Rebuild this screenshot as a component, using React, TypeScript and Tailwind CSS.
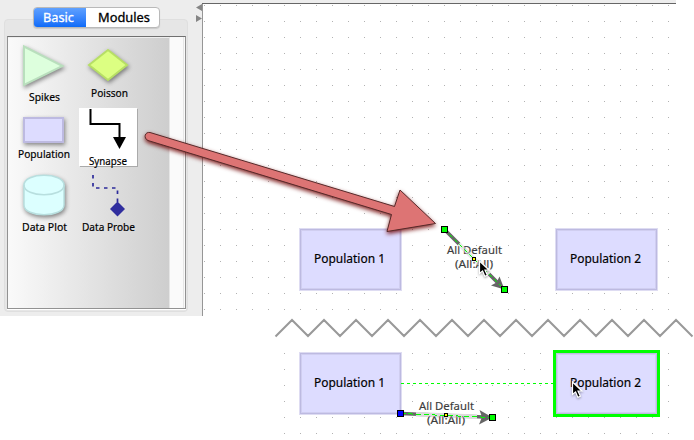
import React from "react";

const FONT = "font-['Noto_Sans','Open_Sans',sans-serif]";

function Label({ text, width, className }: { text: string; width: number; className: string }) {
  return (
    <svg width={width} height="16" className={"block overflow-visible " + className}>
      <text x="0" y="12" textLength={width} lengthAdjust="spacingAndGlyphs" className={FONT + " text-[11.3px] fill-black stroke-black [stroke-width:0.2px]"}>{text}</text>
    </svg>
  );
}

function Cursor({ className }: { className: string }) {
  return (
    <svg viewBox="0 0 14 19" width="14" height="19" className={"absolute overflow-visible drop-shadow-[0_1px_1px_rgba(0,0,0,0.35)] " + className}>
      <path d="M1.5 1 V13.5 L4.6 10.9 L6.9 16.4 L9.4 15.3 L7 10 H11 Z" fill="#000" stroke="#fff" strokeWidth="1.2" />
    </svg>
  );
}

function Population({ name, className }: { name: string; className: string }) {
  return (
    <div className={"absolute flex items-center justify-center bg-[#dddcff] pb-[2px] pr-[2px] " + className}>
      <svg width="71" height="18" className="overflow-visible">
        <text x="0" y="13" textLength="71" lengthAdjust="spacingAndGlyphs" className={FONT + " text-[13px] fill-black stroke-black [stroke-width:0.2px]"}>{name}</text>
      </svg>
    </div>
  );
}

const NODE = "h-[63px] w-[103px] border border-[#dedcf2] shadow-[inset_0_0_0_1px_#bdbae1,inset_0_0_0_2px_#d0cef0]";
const SHADOW = "overflow-visible drop-shadow-[1px_2px_2px_rgba(0,0,0,0.45)]";

function LinkLabel({ x, y }: { x: number; y: number }) {
  return (
    <g className={FONT + " text-[11.5px] fill-[#3c3c3c] stroke-[#3c3c3c] [stroke-width:0.15px]"}>
      <text x={x} y={y} textLength="55" lengthAdjust="spacingAndGlyphs">All Default</text>
      <text x={x + 8} y={y + 14} textLength="38" lengthAdjust="spacingAndGlyphs">(All:All)</text>
    </g>
  );
}

function Palette() {
  return (
    <aside className="relative h-[316px] w-[202px] shrink-0 bg-[#ededed] px-1 pt-[19px]">
      <div className="h-[293px] w-[184px] rounded-[4px] border border-[#dfdfdf] bg-[#e6e6e6] px-0.5 pt-4">
        <div className="flex h-[273px] w-[179px] border border-[#929292] border-t-[#707070] bg-[#fafafa] shadow-[0_1px_0_#fff]">
          <div className="grid h-full w-[161px] grid-cols-[70px_91px] grid-rows-[70px_61px_1fr] border-t border-[#eee] bg-linear-to-r from-[#fafafa] to-[#cecece]">
            <div>
              <svg width="42" height="42" className={"ml-[15px] mt-[7px] " + SHADOW}>
                <path d="M1 1.5 L39.5 21 L1 40 Z" fill="#ddffdd" stroke="#b9dfbd" strokeWidth="2" />
              </svg>
              <Label text="Spikes" width={31} className="ml-[21px] mt-[2px]" />
            </div>
            <div>
              <svg width="42" height="36" className={"ml-[9px] mt-[10px] " + SHADOW}>
                <path d="M2 17 L21 2 L40 17 L21 32 Z" fill="#dcff82" stroke="#b7df65" strokeWidth="2" />
              </svg>
              <Label text="Poisson" width={37} className="ml-[13px] mt-px" />
            </div>
            <div>
              <svg width="42" height="27" className={"ml-[15px] mt-[9px] " + SHADOW}>
                <rect x="1" y="1" width="39" height="24" fill="#dddcff" stroke="#bdbae1" strokeWidth="2" />
              </svg>
              <Label text="Population" width={52} className="ml-[10px] mt-[2px]" />
            </div>
            <div className="ml-[1px] h-[58px] w-[58px] bg-white shadow-[1px_1px_0_#aaa]">
              <svg width="58" height="42" className="block">
                <path d="M11.5 1 V16 H40.5 V30" fill="none" stroke="#000" strokeWidth="2" />
                <path d="M34 29 H47 L40.5 41 Z" fill="#000" />
              </svg>
              <Label text="Synapse" width={38} className="-mb-[3px] ml-[10px] mt-[3px]" />
            </div>
            <div>
              <svg width="43" height="43" className={"ml-[15px] mt-[5px] " + SHADOW}>
                <path d="M1 11 C1 -2 41 -2 41 11 V31 C41 44 1 44 1 31 Z" fill="#dcffff" stroke="#b8dfdf" strokeWidth="1.5" />
                <path d="M1 11 C1 24 41 24 41 11" fill="none" stroke="#b8dfdf" strokeWidth="1.5" />
              </svg>
              <Label text="Data Plot" width={45} className="ml-[14px] mt-[2px]" />
            </div>
            <div>
              <svg width="40" height="44" className="ml-[13px] mt-[5px] block">
                <path d="M2 1 V14 H26.5 V30" fill="none" stroke="#2d2b9b" strokeWidth="1.7" strokeDasharray="3.5 4.5" />
                <path d="M19 35 L26.5 27.5 L34 35 L26.5 42.5 Z" fill="#302e9e" />
              </svg>
              <Label text="Data Probe" width={53} className="ml-[4px] mt-px" />
            </div>
          </div>
          <div className="h-full w-[15px] border-x border-[#e6e6e6] bg-[#fafafa]" />
        </div>
      </div>
      <div className="absolute left-[33px] top-[7px] flex h-[21px] w-[127px] overflow-hidden rounded-[4px] border border-[#b9b9b9] bg-white shadow-[0_1px_1px_rgba(0,0,0,0.12)]">
        <div className="-my-px -ml-px w-[53px] bg-linear-to-b from-[#62a3ff] to-[#0368f8] pl-[10px] pt-[2px]">
          <svg width="31" height="18" className="overflow-visible"><text x="0" y="13" textLength="31" lengthAdjust="spacingAndGlyphs" className={FONT + " text-[13px] fill-white stroke-white [stroke-width:0.3px]"}>Basic</text></svg>
        </div>
        <div className="pl-[12px] pt-px">
          <svg width="52" height="18" className="overflow-visible"><text x="0" y="13" textLength="52" lengthAdjust="spacingAndGlyphs" className={FONT + " text-[13px] fill-black stroke-black [stroke-width:0.3px]"}>Modules</text></svg>
        </div>
      </div>
      <svg width="7" height="20" className="absolute left-[196px] top-[3px]">
        <path d="M6 1 V8 L0 4.5 Z M0 12 V19 L6 15.5 Z" fill="#858585" />
      </svg>
    </aside>
  );
}

function Dots({ id, width, height }: { id: string; width: number; height: number }) {
  return (
    <svg width={width} height={height} className="block">
      <pattern id={id} width="16" height="16" patternUnits="userSpaceOnUse"><rect width="1" height="1" fill="#b2b2b2" /></pattern>
      <rect width={width} height={height} fill={"url(#" + id + ")"} />
    </svg>
  );
}

export default function App() {
  return (
    <main className={"relative h-[440px] w-[694px] overflow-hidden bg-white " + FONT}>
      <div className="flex">
        <Palette />
        <section className="h-[316px] w-[474px] border-l border-[#969696] bg-white">
          <div className="-ml-px h-[3px] bg-[#ededed]" />
          <div className="-ml-px h-px bg-[#666]" />
          <div className="pl-px pt-px"><Dots id="upper" width={465} height={305} /></div>
        </section>
      </div>
      <svg width="694" height="24" className="block">
        <path d="M275.5 20.5 L292 4 L308 20 L324 4 L340 20 L356 4 L372 20 L388 4 L404 20 L420 4 L436 20 L452 4 L468 20 L484 4 L500 20 L516 4 L532 20 L548 4 L564 20 L580 4 L596 20 L612 4 L628 20 L644 4 L660 20 L676 4 L692.5 20.5" fill="none" stroke="#999" strokeWidth="2" />
      </svg>
      <div className="pl-[284px] pt-[13px]"><Dots id="lower" width={385} height={81} /></div>

      <Population name="Population 1" className={"left-[299px] top-[228px] " + NODE} />
      <Population name="Population 2" className={"left-[555px] top-[228px] " + NODE} />
      <Population name="Population 1" className={"left-[299px] top-[352px] " + NODE} />
      <Population name="Population 2" className="left-[553px] top-[350px] h-[67px] w-[107px] border-[3px] border-[#00ff00] shadow-[inset_0_0_0_1px_#bdbae1,inset_0_0_0_2px_#d0cef0]" />

      <svg width="694" height="440" className="absolute left-0 top-0">
        <g className="drop-shadow-[0_2px_2px_rgba(110,0,0,0.85)]">
          <path d="M150 132.5 L394.5 206.5 L400 190 L435.5 223.5 L387 231.5 L391.5 214.5 L148 140.5 C143 138 145 131.5 150 132.5 Z" fill="#dd7474" stroke="#572a2a" strokeWidth="1" strokeLinejoin="round" />
        </g>

        <path d="M444.5 229.5 L499 284" stroke="#666" strokeWidth="3.5" />
        <path d="M504.5 289.5 L491 285.5 L496.5 282.5 L499.5 276.5 Z" fill="#666" />
        <path d="M459 244 L489 274" stroke="#fff" strokeOpacity=".85" strokeWidth="4.5" />
        <LinkLabel x={447} y={254} />
        <path d="M459 244 L489 274" stroke="#e8e8e8" strokeOpacity=".55" strokeWidth="4" />
        <path d="M444.5 229.5 L504.5 289.5" stroke="#00ff00" strokeWidth="1" strokeDasharray="4 3" />
        <rect x="441.5" y="226.5" width="6" height="6" fill="#00ff00" stroke="#000" />
        <rect x="501.5" y="286.5" width="6" height="6" fill="#00ff00" stroke="#000" />
        <rect x="472.5" y="257.5" width="3" height="3" fill="#ffff00" stroke="#000" />

        <path d="M401 383.5 H553" stroke="#00ff00" strokeWidth="1" strokeDasharray="3 3" />
        <path d="M400.5 413.5 L484 417" stroke="#666" strokeWidth="3.5" />
        <path d="M492.5 417.5 L479 424.5 L482 417 L479.5 410 Z" fill="#666" />
        <path d="M416 414.2 L477 416.8" stroke="#dcdcdc" strokeWidth="4.5" />
        <LinkLabel x={419} y={410} />
        <path d="M416 414.2 L477 416.8" stroke="#dcdcdc" strokeOpacity=".35" strokeWidth="4" />
        <path d="M400.5 413.5 L492.5 417.5" stroke="#00ff00" strokeWidth="1" strokeDasharray="5 3" shapeRendering="crispEdges" />
        <rect x="397.5" y="410.5" width="6" height="6" fill="#0000ff" stroke="#000" />
        <rect x="489.5" y="414.5" width="6" height="6" fill="#00ff00" stroke="#000" />
        <rect x="444.5" y="413.5" width="3" height="3" fill="#ffff00" stroke="#000" />
      </svg>
      <Cursor className="left-[478px] top-[260px]" />
      <Cursor className="left-[571px] top-[381px]" />
    </main>
  );
}
